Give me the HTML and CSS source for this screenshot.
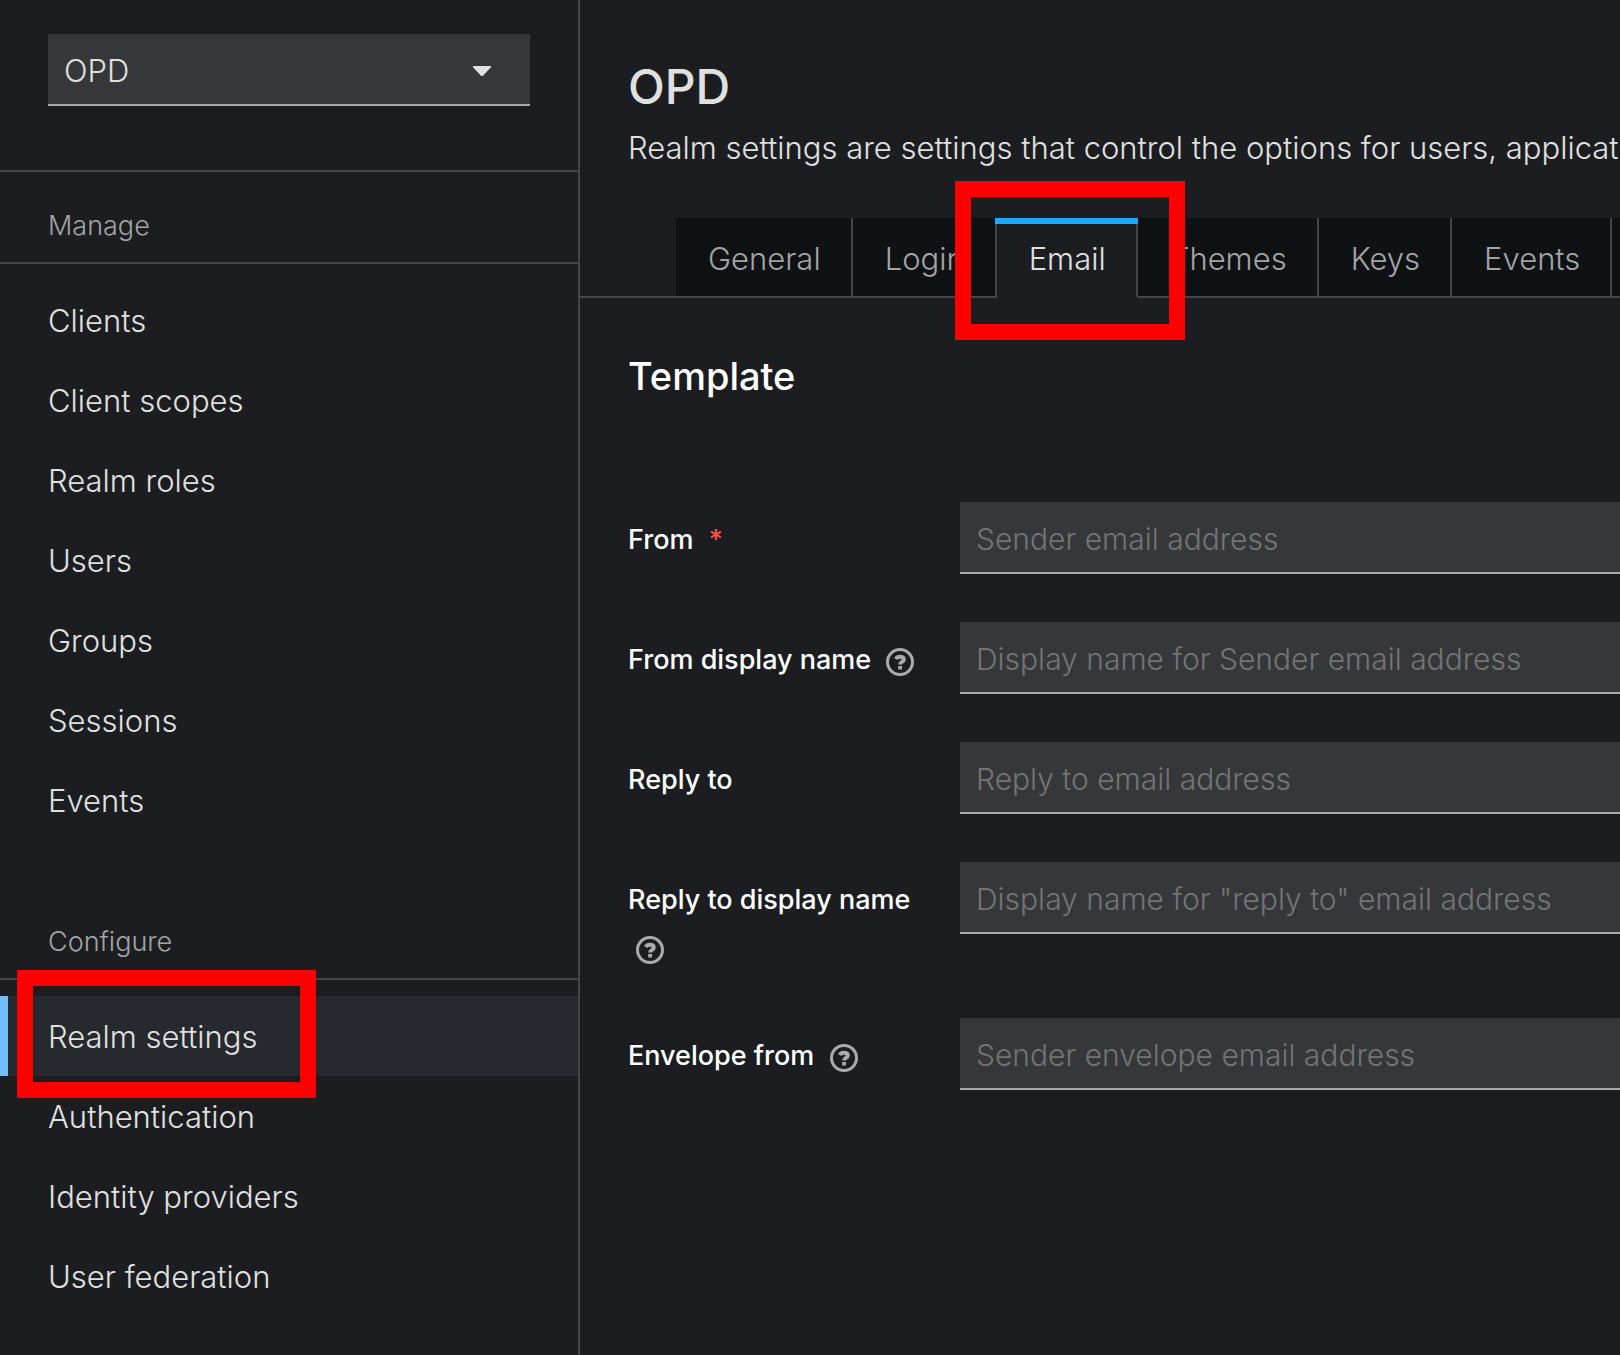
FILE: index.html
```html
<!DOCTYPE html>
<html lang="en">
<head>
<meta charset="utf-8">
<title>OPD - Realm settings</title>
<link rel="stylesheet" href="styles.css">
</head>
<body>
<div class="app">
  <aside class="sidebar">
    <div class="realm">
      <div class="realm-picker">
        <select class="realm-select" aria-label="Realm">
          <option>OPD</option>
        </select>
        <svg class="realm-caret" viewBox="0 0 20 12" aria-hidden="true"><path d="M2 1h16q2 0 .8 1.500l-7.600 8q-1.200 1.200-2.400 0L1.200 2.500Q0 1 2 1z"/></svg>
      </div>
    </div>
    <nav class="nav" aria-label="Main">
      <section class="nav-section">
        <h2 class="nav-title">Manage</h2>
        <ul class="nav-list">
          <li><a class="nav-link" href="#clients">Clients</a></li>
          <li><a class="nav-link" href="#client-scopes">Client scopes</a></li>
          <li><a class="nav-link" href="#roles">Realm roles</a></li>
          <li><a class="nav-link" href="#users">Users</a></li>
          <li><a class="nav-link" href="#groups">Groups</a></li>
          <li><a class="nav-link" href="#sessions">Sessions</a></li>
          <li><a class="nav-link" href="#events">Events</a></li>
        </ul>
      </section>
      <section class="nav-section">
        <h2 class="nav-title">Configure</h2>
        <ul class="nav-list">
          <li class="nav-item-current"><a class="nav-link nav-link-current" href="#realm-settings" aria-current="page">Realm settings</a><span class="callout callout-nav"></span></li>
          <li><a class="nav-link" href="#authentication">Authentication</a></li>
          <li><a class="nav-link" href="#identity-providers">Identity providers</a></li>
          <li><a class="nav-link" href="#user-federation">User federation</a></li>
        </ul>
      </section>
    </nav>
  </aside>
  <main class="main">
    <header class="page-header">
      <h1 class="page-title">OPD</h1>
      <p class="page-text">Realm settings are settings that control the options for users, applications, roles, and groups in the current realm.</p>
    </header>
    <div class="tabs" role="tablist">
      <button class="tab" role="tab" type="button">General</button>
      <button class="tab" role="tab" type="button">Login</button>
      <div class="tab-current-wrap"><button class="tab tab-current" role="tab" type="button" aria-selected="true">Email</button><span class="callout callout-tab"></span></div>
      <button class="tab" role="tab" type="button">Themes</button>
      <button class="tab" role="tab" type="button">Keys</button>
      <button class="tab" role="tab" type="button">Events</button>
      <button class="tab" role="tab" type="button">Localization</button>
    </div>
    <form class="form">
      <h2 class="form-title">Template</h2>
      <div class="field">
        <div class="field-label"><label for="from">From</label> <span class="required">*</span></div>
        <input class="field-input" id="from" type="text" placeholder="Sender email address">
      </div>
      <div class="field">
        <div class="field-label"><label for="from-name">From display name</label> <button class="help" type="button" aria-label="Help for From display name"><svg class="help-icon" viewBox="0 0 28 28" aria-hidden="true"><circle cx="14" cy="14" r="12.500"/><path class="help-mark" d="M9.800 11C10.600 9.400 12 8.700 13.900 8.700c2.300 0 3.900 1 3.900 2.800 0 2.600-3.700 2.300-3.700 5.100"/><path class="help-dot" d="M12.200 18h3.800v3.500h-3.800z"/></svg></button></div>
        <input class="field-input" id="from-name" type="text" placeholder="Display name for Sender email address">
      </div>
      <div class="field">
        <div class="field-label"><label for="reply-to">Reply to</label></div>
        <input class="field-input" id="reply-to" type="text" placeholder="Reply to email address">
      </div>
      <div class="field">
        <div class="field-label"><label for="reply-to-name">Reply to display name</label> <button class="help" type="button" aria-label="Help for Reply to display name"><svg class="help-icon" viewBox="0 0 28 28" aria-hidden="true"><circle cx="14" cy="14" r="12.500"/><path class="help-mark" d="M9.800 11C10.600 9.400 12 8.700 13.900 8.700c2.300 0 3.900 1 3.900 2.800 0 2.600-3.700 2.300-3.700 5.100"/><path class="help-dot" d="M12.200 18h3.800v3.500h-3.800z"/></svg></button></div>
        <input class="field-input" id="reply-to-name" type="text" placeholder="Display name for &quot;reply to&quot; email address">
      </div>
      <div class="field">
        <div class="field-label"><label for="envelope">Envelope from</label> <button class="help" type="button" aria-label="Help for Envelope from"><svg class="help-icon" viewBox="0 0 28 28" aria-hidden="true"><circle cx="14" cy="14" r="12.500"/><path class="help-mark" d="M9.800 11C10.600 9.400 12 8.700 13.900 8.700c2.300 0 3.900 1 3.900 2.800 0 2.600-3.700 2.300-3.700 5.100"/><path class="help-dot" d="M12.200 18h3.800v3.500h-3.800z"/></svg></button></div>
        <input class="field-input" id="envelope" type="text" placeholder="Sender envelope email address">
      </div>
    </form>
  </main>
</div>
</body>
</html>
```
FILE: styles.css
```css
*,
*::before,
*::after {
  box-sizing: border-box;
}

body {
  margin: 0;
  background: #1b1d21;
  color: #e0e0e0;
  font-family: "Inter", sans-serif;
  font-size: 31px;
  font-weight: 300;
  line-height: 48px;
}

h1,
h2,
p,
ul {
  margin: 0;
  padding: 0;
}

button,
input,
select {
  font: inherit;
}

.app {
  display: flex;
  min-height: 100vh;
  overflow: hidden;
}

/* Sidebar */
.sidebar {
  flex: 0 0 580px;
  border-right: 2px solid #444548;
}

.realm {
  padding: 34px 48px 64px;
  border-bottom: 2px solid #444548;
}

.realm-picker {
  position: relative;
}

.realm-select {
  display: block;
  width: 100%;
  height: 72px;
  padding: 4px 16px 0;
  appearance: none;
  border: 0;
  border-bottom: 2px solid #aaabac;
  border-radius: 0;
  background: #36373a;
  color: #e0e0e0;
}

.realm-caret {
  position: absolute;
  top: 31px;
  right: 38px;
  width: 20px;
  height: 12px;
  fill: #e0e0e0;
}

.nav {
  display: flex;
  flex-direction: column;
  gap: 48px;
}

.nav-title {
  padding: 34px 48px 16px;
  border-bottom: 2px solid #444548;
  color: #a3a4a6;
  font-size: 27px;
  font-weight: 300;
  line-height: 40px;
}

.nav-list {
  padding-top: 16px;
  list-style: none;
}

.nav-link {
  display: block;
  padding: 17px 48px 15px;
  color: #e0e0e0;
  text-decoration: none;
}

.nav-item-current {
  position: relative;
}

.nav-link-current {
  background: #26292d;
  box-shadow: inset 8px 0 #73bcf7;
}

/* Red outlines drawn over the content they point at */
.callout {
  position: absolute;
  z-index: 1;
  border: 16px solid #ff0000;
  pointer-events: none;
}

.callout-nav {
  top: -26px;
  left: 17px;
  width: 299px;
  height: 128px;
}

.callout-tab {
  inset: -37px -47px -42px -42px;
}

/* Main */
.main {
  flex: 1;
  min-width: 0;
}

.page-header {
  padding: 52px 48px 46px;
}

.page-title {
  font-size: 48px;
  font-weight: 500;
  line-height: 70px;
}

.page-text {
  margin-top: 2px;
  white-space: nowrap;
}

.tabs {
  display: flex;
  padding-left: 96px;
  box-shadow: inset 0 -2px #444548;
}

.tab {
  flex: none;
  display: block;
  height: 80px;
  padding: 4px 30px 0 32px;
  border: 0;
  border-right: 2px solid #444548;
  border-bottom: 2px solid #444548;
  background: #0f1214;
  color: #a3a4a6;
}

.tab-current-wrap {
  position: relative;
}

.tab-current-wrap::before {
  content: "";
  position: absolute;
  top: 0;
  right: 0;
  left: -2px;
  height: 6px;
  background: #1fa7f8;
}

.tab-current {
  border-bottom-color: #1b1d21;
  background: #1b1d21;
  color: #e0e0e0;
}

.form {
  display: flex;
  flex-direction: column;
  gap: 48px;
  padding: 48px 0 48px 48px;
}

.form-title {
  margin-bottom: 48px;
  color: #ffffff;
  font-size: 38px;
  font-weight: 500;
  line-height: 60px;
}

.field {
  display: grid;
  grid-template-columns: 300px 1fr;
  column-gap: 32px;
  align-items: start;
}

/* The label block sits low in its row so its text lines up with the input's */
.field-label {
  margin-bottom: -2px;
  padding-top: 14px;
  color: #ffffff;
  font-size: 27px;
  font-weight: 500;
}

.required {
  margin-left: 8px;
  color: #fe5142;
}

.help {
  margin: 0 0 0 8px;
  padding: 0;
  border: 0;
  background: none;
  line-height: 28px;
  vertical-align: middle;
}

.help-icon {
  display: block;
  width: 28px;
  height: 28px;
  fill: none;
  stroke: #aaabac;
  stroke-width: 3;
}

.help-mark {
  stroke-width: 4;
}

.help-dot {
  fill: #aaabac;
  stroke: none;
}

.field-input {
  width: 100%;
  height: 72px;
  padding: 4px 16px 0;
  border: 0;
  border-bottom: 2px solid #aaabac;
  border-radius: 0;
  background: #36373a;
  color: #e0e0e0;
  font-size: 30px;
}

.field-input::placeholder {
  color: #737476;
  opacity: 1;
}
```
